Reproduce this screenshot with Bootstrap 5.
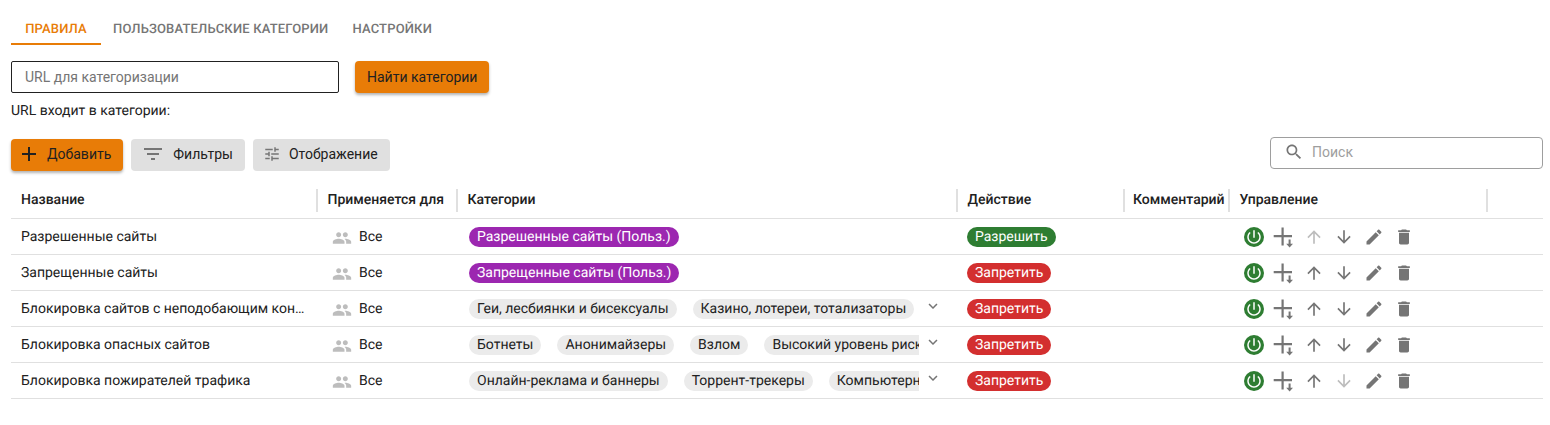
<!DOCTYPE html>
<html lang="ru">
<head>
<meta charset="utf-8">
<title>Правила</title>
<link href="https://cdn.jsdelivr.net/npm/bootstrap@5.3.0/dist/css/bootstrap.min.css" rel="stylesheet">
<style>
body{font-family:Roboto,"Liberation Sans",sans-serif;font-size:14px;color:#212121;background:#fff;line-height:20px;text-rendering:geometricPrecision}
.page-wrap{padding:0 7px 0 11px}
.tabs-bar{height:45px;align-items:flex-end}
.tab-item{display:block;box-sizing:border-box;min-width:90px;height:32px;padding:8px 12px 0;font-size:13px;font-weight:500;line-height:18px;letter-spacing:.16px;text-transform:uppercase;color:#757575;text-align:center;text-decoration:none;border-bottom:2px solid transparent}
.tab-item.on{color:#e87c07;border-bottom-color:#e87c07}
.tab-item:hover{color:#757575}.tab-item.on:hover{color:#e87c07}
.url-row{margin-top:16px;gap:16px}
.url-input{width:328px;height:32px;border:1px solid #212121;border-radius:2px;padding:0 13px;font-size:14px;color:#212121;background:#fff;box-shadow:none}
.url-input::placeholder{color:#757575;opacity:1}
.url-input:focus{border-color:#212121;box-shadow:none}
.act-btn{height:32px;padding:0 12px;border:0;border-radius:4px;font-size:14px;line-height:20px;color:#212121;display:inline-flex;align-items:center}
.act-orange,.act-orange:hover,.act-orange:active{background:#e87c07;color:#212121;box-shadow:0 2px 3px rgba(0,0,0,.3)}
.act-grey,.act-grey:hover,.act-grey:active{background:#e0e0e0;color:#212121}
.url-note{margin:8px 0 0;height:20px}
.tool-row{margin-top:16px;height:45px}
.tool-btns{margin-top:2px;gap:8px}
.tool-btns .act-btn{padding-bottom:2px}
.btn-add{padding-left:6px;gap:6px}
.btn-side{padding-left:10px;gap:8px}
.act-btn svg{fill:#757575;flex:none}
.act-orange svg{fill:#212121}
.search-box{width:273px;height:32px;border:1px solid #9e9e9e;border-radius:4px;padding:0 13px 2px;gap:8px;color:#9e9e9e}
.search-box svg{fill:#757575;flex:none}
.search-input{border:0;outline:0;padding:0;font-size:14px;width:100%;background:transparent}
.search-input::placeholder{color:#9e9e9e;opacity:1}
.rules-table{table-layout:fixed;width:1532px;margin:0;color:#212121;font-size:14px}
.rules-table>:not(caption)>*>*{padding:2px 10px 0;height:36px;vertical-align:middle;border-bottom:1px solid #e0e0e0;box-shadow:none;color:#212121}
.rules-table thead th{padding:7px 0 0;font-weight:500;vertical-align:top}
.c1{width:306.5px}.c2{width:140px}.c3{width:500px}.c4{width:167px}.c5{width:105px}.c6{width:258px}
.hcell{height:23px;line-height:23px;padding:0 10px;border-right:2px solid #e0e0e0;white-space:nowrap}
.hcell.tight{padding:0 0 0 8.5px}
.users-ico{fill:#bdbdbd;margin:2px 7.5px 0 4px;flex:none}
.chip-row{width:449.5px;margin-left:1.5px;gap:16px;overflow:hidden}
.chip-pill{flex:none;height:20px;line-height:20px;border-radius:10px;padding:0 8px;white-space:nowrap;background:#ebebeb;color:#212121}
.chip-purple{background:#9c27b0;color:#fff}
.chip-green{background:#2e7d32;color:#fff}
.chip-red{background:#d32f2f;color:#fff}
.act-pill{margin-left:-.5px}
.fold-ico{fill:#757575;margin:-2px 0 0 5px;flex:none}
.ctl-row{margin-left:-1px}
.ctl-slot{width:30px;height:24px;flex:none;display:flex;align-items:center;justify-content:center}
.ctl-slot svg{fill:#757575}
.ctl-slot.off svg{fill:#bdbdbd}
.ctl-slot .pwr{fill:#fff}
.pwr-disc{width:20px;height:20px;border-radius:50%;background:#2e7d32;display:flex;align-items:center;justify-content:center}
</style>
</head>
<body>
<svg width="0" height="0" class="d-none">
<defs>
<symbol id="i-users" viewBox="0 0 24 24"><path d="M16 11c1.66 0 2.99-1.34 2.99-3S17.66 5 16 5c-1.66 0-3 1.34-3 3s1.34 3 3 3zm-8 0c1.66 0 2.99-1.34 2.99-3S9.66 5 8 5C6.34 5 5 6.34 5 8s1.34 3 3 3zm0 2c-2.33 0-7 1.17-7 3.5V19h14v-2.5c0-2.33-4.67-3.5-7-3.5zm8 0c-.29 0-.62.02-.97.05 1.16.84 1.97 1.97 1.97 3.45V19h6v-2.5c0-2.33-4.67-3.5-7-3.5z"/></symbol>
<symbol id="i-power" viewBox="0 0 24 24"><path d="M13 3h-2v10h2V3zm4.83 2.17l-1.42 1.42C17.99 7.86 19 9.81 19 12c0 3.87-3.13 7-7 7s-7-3.13-7-7c0-2.19 1.01-4.14 2.58-5.42L6.17 5.17C4.23 6.82 3 9.26 3 12c0 4.97 4.03 9 9 9s9-4.03 9-9c0-2.74-1.23-5.18-3.17-6.83z"/></symbol>
<symbol id="i-addat" viewBox="0 0 24 24"><path d="M9.5 2.5h2.2v7.5h8.3v2.2h-8.3v8.3H9.5v-8.3H1.7V10h7.8z"/><path d="M16.6 14.5h2v4.2h2.4l-3.4 3.8-3.4-3.8h2.4z"/></symbol>
<symbol id="i-up" viewBox="0 0 24 24"><path d="M4 12l1.41 1.41L11 7.83V20h2V7.83l5.58 5.59L20 12l-8-8-8 8z"/></symbol>
<symbol id="i-down" viewBox="0 0 24 24"><path d="M20 12l-1.41-1.41L13 16.17V4h-2v12.17l-5.58-5.59L4 12l8 8 8-8z"/></symbol>
<symbol id="i-edit" viewBox="0 0 24 24"><path d="M3 17.25V21h3.75L17.81 9.94l-3.75-3.75L3 17.25zM20.71 7.04c.39-.39.39-1.02 0-1.41l-2.34-2.34c-.39-.39-1.02-.39-1.41 0l-1.83 1.83 3.75 3.75 1.83-1.83z"/></symbol>
<symbol id="i-trash" viewBox="0 0 24 24"><path d="M6 19c0 1.1.9 2 2 2h8c1.1 0 2-.9 2-2V7H6v12zM19 4h-3.5l-1-1h-5l-1 1H5v2h14V4z"/></symbol>
<symbol id="i-fold" viewBox="0 0 24 24"><path d="M16.59 8.59L12 13.17 7.41 8.59 6 10l6 6 6-6z"/></symbol>
</defs>
</svg>
<div class="page-wrap">
  <nav class="nav tabs-bar">
    <a class="tab-item on" href="#">Правила</a>
    <a class="tab-item" href="#">Пользовательские категории</a>
    <a class="tab-item" href="#">Настройки</a>
  </nav>
  <div class="d-flex url-row">
    <input class="form-control url-input" type="text" placeholder="URL для категоризации">
    <button class="btn act-btn act-orange" type="button">Найти категории</button>
  </div>
  <p class="url-note">URL входит в категории:</p>
  <div class="d-flex justify-content-between align-items-start tool-row">
    <div class="d-flex tool-btns">
      <button class="btn act-btn act-orange btn-add" type="button"><svg width="24" height="24" viewBox="0 0 24 24"><path d="M19 13h-6v6h-2v-6H5v-2h6V5h2v6h6v2z"/></svg>Добавить</button>
      <button class="btn act-btn act-grey btn-side" type="button"><svg width="24" height="24" viewBox="0 0 24 24"><path d="M10 18h4v-2h-4v2zM3 6v2h18V6H3zm3 7h12v-2H6v2z"/></svg>Фильтры</button>
      <button class="btn act-btn act-grey btn-side" type="button"><svg width="18" height="18" viewBox="0 0 24 24"><path d="M3 17v2h6v-2H3zM3 5v2h10V5H3zm10 16v-2h8v-2h-8v-2h-2v6h2zM7 9v2H3v2h4v2h2V9H7zm14 4v-2H11v2h10zm-6-4h2V7h4V5h-4V3h-2v6z"/></svg>Отображение</button>
    </div>
    <label class="d-flex align-items-center search-box">
      <svg width="20" height="20" viewBox="0 0 24 24"><path d="M15.5 14h-.79l-.28-.27C15.41 12.59 16 11.11 16 9.5 16 5.91 13.09 3 9.5 3S3 5.91 3 9.5 5.91 16 9.5 16c1.61 0 3.09-.59 4.23-1.57l.27.28v.79l5 4.99L20.49 19l-4.99-5zm-6 0C7.01 14 5 11.99 5 9.5S7.01 5 9.5 5 14 7.01 14 9.5 11.99 14 9.5 14z"/></svg>
      <input class="search-input" type="text" placeholder="Поиск">
    </label>
  </div>
  <table class="table rules-table">
    <colgroup><col class="c1"><col class="c2"><col class="c3"><col class="c4"><col class="c5"><col class="c6"><col></colgroup>
    <thead>
      <tr>
        <th><div class="hcell">Название</div></th>
        <th><div class="hcell">Применяется для</div></th>
        <th><div class="hcell">Категории</div></th>
        <th><div class="hcell">Действие</div></th>
        <th><div class="hcell tight">Комментарий</div></th>
        <th><div class="hcell">Управление</div></th>
        <th></th>
      </tr>
    </thead>
    <tbody id="rows"></tbody>
  </table>
</div>
<script>
const U=n=>`<svg width="20" height="20"><use href="#i-${n}"/></svg>`;
const data=[
 {n:"Разрешенные сайты",c:[["Разрешенные сайты (Польз.)",1]],a:1,upOff:1},
 {n:"Запрещенные сайты",c:[["Запрещенные сайты (Польз.)",1]]},
 {n:"Блокировка сайтов с неподобающим контентом",c:[["Геи, лесбиянки и бисексуалы"],["Казино, лотереи, тотализаторы"]],f:1},
 {n:"Блокировка опасных сайтов",c:[["Ботнеты"],["Анонимайзеры"],["Взлом"],["Высокий уровень риска"]],f:1},
 {n:"Блокировка пожирателей трафика",c:[["Онлайн-реклама и баннеры"],["Торрент-трекеры"],["Компьютерные игры"]],f:1,downOff:1}
];
document.getElementById("rows").innerHTML=data.map(r=>`<tr>
<td class="text-truncate">${r.n}</td>
<td><div class="d-flex align-items-center"><svg class="users-ico" width="20" height="20"><use href="#i-users"/></svg>Все</div></td>
<td><div class="d-flex align-items-start"><div class="d-flex chip-row">${r.c.map(c=>`<span class="chip-pill${c[1]?" chip-purple":""}">${c[0]}</span>`).join("")}</div>${r.f?'<svg class="fold-ico" width="18" height="18"><use href="#i-fold"/></svg>':""}</div></td>
<td><span class="chip-pill act-pill d-inline-block ${r.a?"chip-green":"chip-red"}">${r.a?"Разрешить":"Запретить"}</span></td>
<td></td>
<td><div class="d-flex align-items-center ctl-row">
<span class="ctl-slot"><span class="pwr-disc"><svg class="pwr" width="18" height="18"><use href="#i-power"/></svg></span></span>
<span class="ctl-slot"><svg width="24" height="24"><use href="#i-addat"/></svg></span>
<span class="ctl-slot${r.upOff?" off":""}">${U("up")}</span>
<span class="ctl-slot${r.downOff?" off":""}">${U("down")}</span>
<span class="ctl-slot">${U("edit")}</span>
<span class="ctl-slot">${U("trash")}</span>
</div></td>
<td></td>
</tr>`).join("");
</script>
<script src="https://cdn.jsdelivr.net/npm/bootstrap@5.3.0/dist/js/bootstrap.bundle.min.js"></script>
</body>
</html>
